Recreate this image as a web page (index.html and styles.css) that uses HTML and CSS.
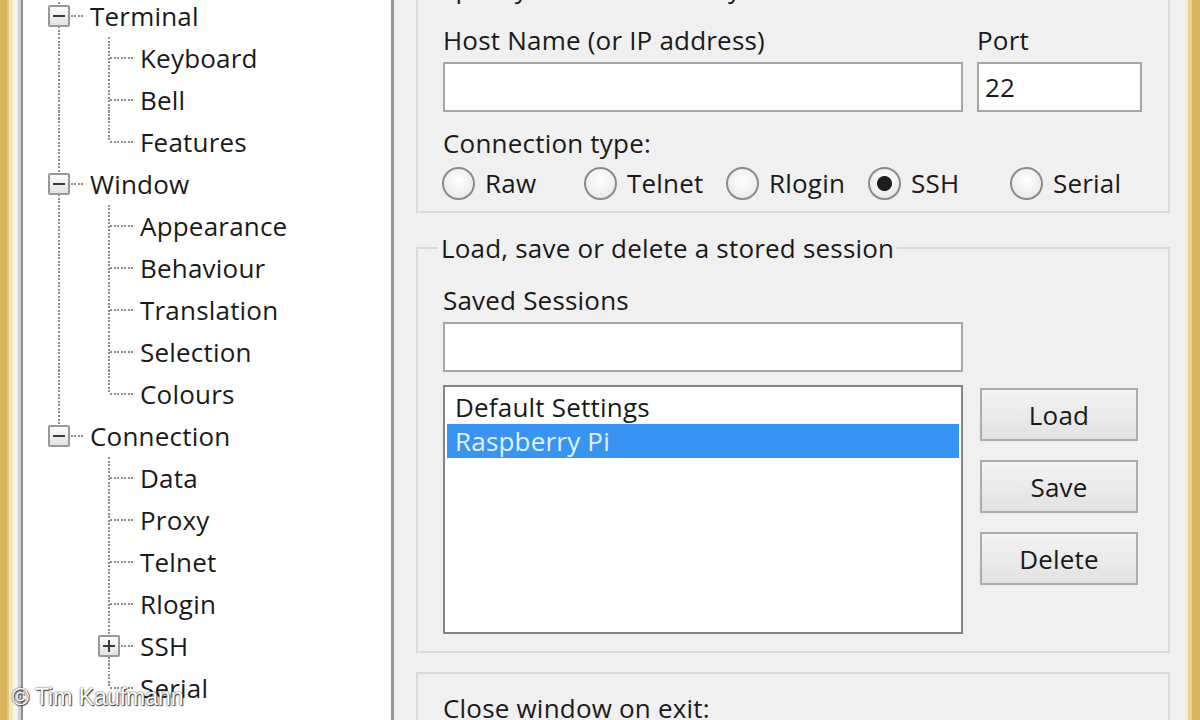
FILE: index.html
```html
<!DOCTYPE html>
<html lang="en">
<head>
    <meta charset="UTF-8">
    <meta name="viewport" content="width=device-width, initial-scale=1.0">
    <title>PuTTY Configuration</title>
    <link rel="stylesheet" href="styles.css">
</head>
<body>

<div class="window">
    <div class="frame-left"></div>

    <!-- Category tree -->
    <div class="tree">
        <div class="tree-list">
            <div class="row"><span class="col root-mid"><span class="exp"></span></span><span class="label">Terminal</span></div>
            <div class="row"><span class="col pipe"></span><span class="col tee"></span><span class="label">Keyboard</span></div>
            <div class="row"><span class="col pipe"></span><span class="col tee"></span><span class="label">Bell</span></div>
            <div class="row"><span class="col pipe"></span><span class="col elbow"></span><span class="label">Features</span></div>
            <div class="row"><span class="col root-mid"><span class="exp"></span></span><span class="label">Window</span></div>
            <div class="row"><span class="col pipe"></span><span class="col tee"></span><span class="label">Appearance</span></div>
            <div class="row"><span class="col pipe"></span><span class="col tee"></span><span class="label">Behaviour</span></div>
            <div class="row"><span class="col pipe"></span><span class="col tee"></span><span class="label">Translation</span></div>
            <div class="row"><span class="col pipe"></span><span class="col tee"></span><span class="label">Selection</span></div>
            <div class="row"><span class="col pipe"></span><span class="col elbow"></span><span class="label">Colours</span></div>
            <div class="row"><span class="col elbow"><span class="exp"></span></span><span class="label">Connection</span></div>
            <div class="row"><span class="col"></span><span class="col tee"></span><span class="label">Data</span></div>
            <div class="row"><span class="col"></span><span class="col tee"></span><span class="label">Proxy</span></div>
            <div class="row"><span class="col"></span><span class="col tee"></span><span class="label">Telnet</span></div>
            <div class="row"><span class="col"></span><span class="col tee"></span><span class="label">Rlogin</span></div>
            <div class="row"><span class="col"></span><span class="col tee"><span class="exp plus"></span></span><span class="label">SSH</span></div>
            <div class="row"><span class="col"></span><span class="col elbow"></span><span class="label">Serial</span></div>
        </div>
    </div>

    <!-- Session panel -->
    <div class="panel">
        <fieldset class="group dest">
            <legend>Specify the destination you want to connect to</legend>
            <div class="host-row">
                <label class="field host">
                    <span class="caption">Host Name (or IP address)</span>
                    <input type="text" value="">
                </label>
                <label class="field port">
                    <span class="caption">Port</span>
                    <input type="text" value="22">
                </label>
            </div>
            <div class="caption conn-caption">Connection type:</div>
            <div class="radios">
                <label class="radio"><input type="radio" name="proto">Raw</label>
                <label class="radio"><input type="radio" name="proto">Telnet</label>
                <label class="radio"><input type="radio" name="proto">Rlogin</label>
                <label class="radio"><input type="radio" name="proto" checked>SSH</label>
                <label class="radio"><input type="radio" name="proto">Serial</label>
            </div>
        </fieldset>

        <fieldset class="group sessions">
            <legend>Load, save or delete a stored session</legend>
            <div class="caption">Saved Sessions</div>
            <input class="session-name" type="text" value="">
            <div class="session-row">
                <div class="list">
                    <div class="item">Default Settings</div>
                    <div class="item selected">Raspberry Pi</div>
                </div>
                <div class="buttons">
                    <button>Load</button>
                    <button>Save</button>
                    <button>Delete</button>
                </div>
            </div>
        </fieldset>

        <fieldset class="group close-opts">
            <div class="caption">Close window on exit:</div>
        </fieldset>
    </div>

    <div class="frame-right"></div>

    <div class="credit">© Tim Kaufmann</div>
</div>

</body>
</html>
```

FILE: styles.css
```css
:root {
    --dot-v: repeating-linear-gradient(to bottom, #8d8d8d 0 2px, transparent 2px 3.5px);
    --dot-h: repeating-linear-gradient(to right, #8d8d8d 0 2px, transparent 2px 3.5px);
}
body {
    margin: 0;
    width: 1200px;
    height: 720px;
    overflow: hidden;
    background-color: #f0f0f0;
    font-family: "Open Sans", "Noto Sans", sans-serif;
    font-size: 26px;
    letter-spacing: 0.2px;
    color: #1a1a1a;
}
.window {
    position: relative;
    display: flex;
    height: 720px;
    overflow: hidden;
}

/* window frame edges */
.frame-left {
    width: 23px;
    flex: none;
    background: linear-gradient(to right, #d9b45e 0 7px, #e6c677 7px 9px, #f4e6c4 9px 13px, #f5f4f1 13px 18px, #d2d2d2 18px 21px, #8e8e8e 21px 23px);
}
.frame-right {
    width: 15px;
    flex: none;
    background: linear-gradient(to right, #f6ecd6 0 3px, #ebd293 3px 7px, #dbb660 7px 15px);
}

/* tree */
.tree {
    width: 371px;
    flex: none;
    box-sizing: border-box;
    background-color: #fff;
    border-right: 3px solid #979797;
    padding-left: 11px;
    overflow: hidden;
}
.tree-list { margin-top: -5px; }
.row {
    display: flex;
    align-items: center;
    height: 42px;
}
.col {
    width: 50px;
    height: 42px;
    flex: none;
    display: flex;
    align-items: center;
    justify-content: center;
}
.pipe { background: var(--dot-v) 24px 0 / 2px 100% no-repeat; }
.tee,
.root-mid {
    background: var(--dot-v) 24px 0 / 2px 100% no-repeat,
                var(--dot-h) 26px 20px / 24px 2px no-repeat;
}
.elbow {
    background: var(--dot-v) 24px 0 / 2px 21px no-repeat,
                var(--dot-h) 26px 20px / 24px 2px no-repeat;
}
.exp {
    width: 22px;
    height: 22px;
    box-sizing: border-box;
    border: 2px solid #999;
    border-radius: 2px;
    background: linear-gradient(#3b3b3b, #3b3b3b) center / 12px 2px no-repeat,
                linear-gradient(#fbfbfb, #e3e3e3);
}
.exp.plus {
    background: linear-gradient(#3b3b3b, #3b3b3b) center / 12px 2px no-repeat,
                linear-gradient(#3b3b3b, #3b3b3b) center / 2px 12px no-repeat,
                linear-gradient(#fbfbfb, #e3e3e3);
}
.label {
    margin-left: 6px;
    line-height: 42px;
    white-space: nowrap;
}

/* right panel */
.panel {
    flex: 1;
    padding: 0 15px 0 22px;
    overflow: hidden;
}
.group {
    margin: 0;
    min-width: 0;
    border: 2px solid #d9d9d9;
    padding: 20px 24px 12px 25px;
}
.group legend {
    padding: 0 3px;
    margin-left: -5px;
    line-height: 32px;
}
.caption {
    display: block;
    line-height: 32px;
    white-space: nowrap;
}
.dest { margin-top: -28px; }
.host-row {
    display: flex;
    gap: 14px;
}
.field {
    display: flex;
    flex-direction: column;
    gap: 6px;
}
.host { width: 520px; }
.port { width: 165px; }
input[type="text"] {
    height: 50px;
    box-sizing: border-box;
    border: 2px solid #a6a6a6;
    padding: 0 6px;
    background-color: #fff;
    font: inherit;
    letter-spacing: inherit;
    color: inherit;
    outline: none;
}
.conn-caption { margin-top: 15px; }
.radios {
    display: grid;
    grid-template-columns: repeat(5, 142px);
    margin-top: 6px;
    margin-left: -1px;
    height: 34px;
}
.radio {
    display: flex;
    align-items: center;
    gap: 10px;
}
.radio input {
    appearance: none;
    margin: 0;
    width: 33px;
    height: 33px;
    border-radius: 50%;
    border: 2px solid #8b8b8b;
    background: radial-gradient(circle at 50% 40%, #fff, #e4e4e4);
}
.radio input:checked {
    background: radial-gradient(circle, #1e1e1e 0 7px, transparent 8px),
                radial-gradient(circle at 50% 40%, #fff, #e4e4e4);
}

.sessions {
    margin-top: 19px;
    padding-bottom: 17px;
}
.session-name {
    width: 520px;
    margin-top: 6px;
}
.session-row {
    display: flex;
    gap: 17px;
    margin-top: 13px;
}
.list {
    width: 520px;
    height: 249px;
    box-sizing: border-box;
    border: 2px solid #858585;
    background-color: #fff;
    padding: 3px 2px;
}
.item {
    height: 34px;
    line-height: 34px;
    padding-left: 8px;
}
.item.selected {
    background-color: #3894f2;
    color: #e4f2ff;
}
.buttons {
    display: flex;
    flex-direction: column;
    gap: 19px;
    padding-top: 3px;
}
.buttons button {
    width: 158px;
    height: 53px;
    border: 2px solid #acacac;
    background: linear-gradient(#f3f3f3, #e2e2e2);
    font: inherit;
    letter-spacing: inherit;
    color: #1a1a1a;
}

.close-opts {
    margin-top: 19px;
    padding-top: 18px;
}

/* photo credit */
.credit {
    position: absolute;
    left: 12px;
    top: 683px;
    font-family: "Liberation Sans", Arial, sans-serif;
    font-size: 23px;
    letter-spacing: 0;
    line-height: 28px;
    color: #fff;
    text-shadow: 0 0 2px #222, 1px 1px 1px #444;
}
```
